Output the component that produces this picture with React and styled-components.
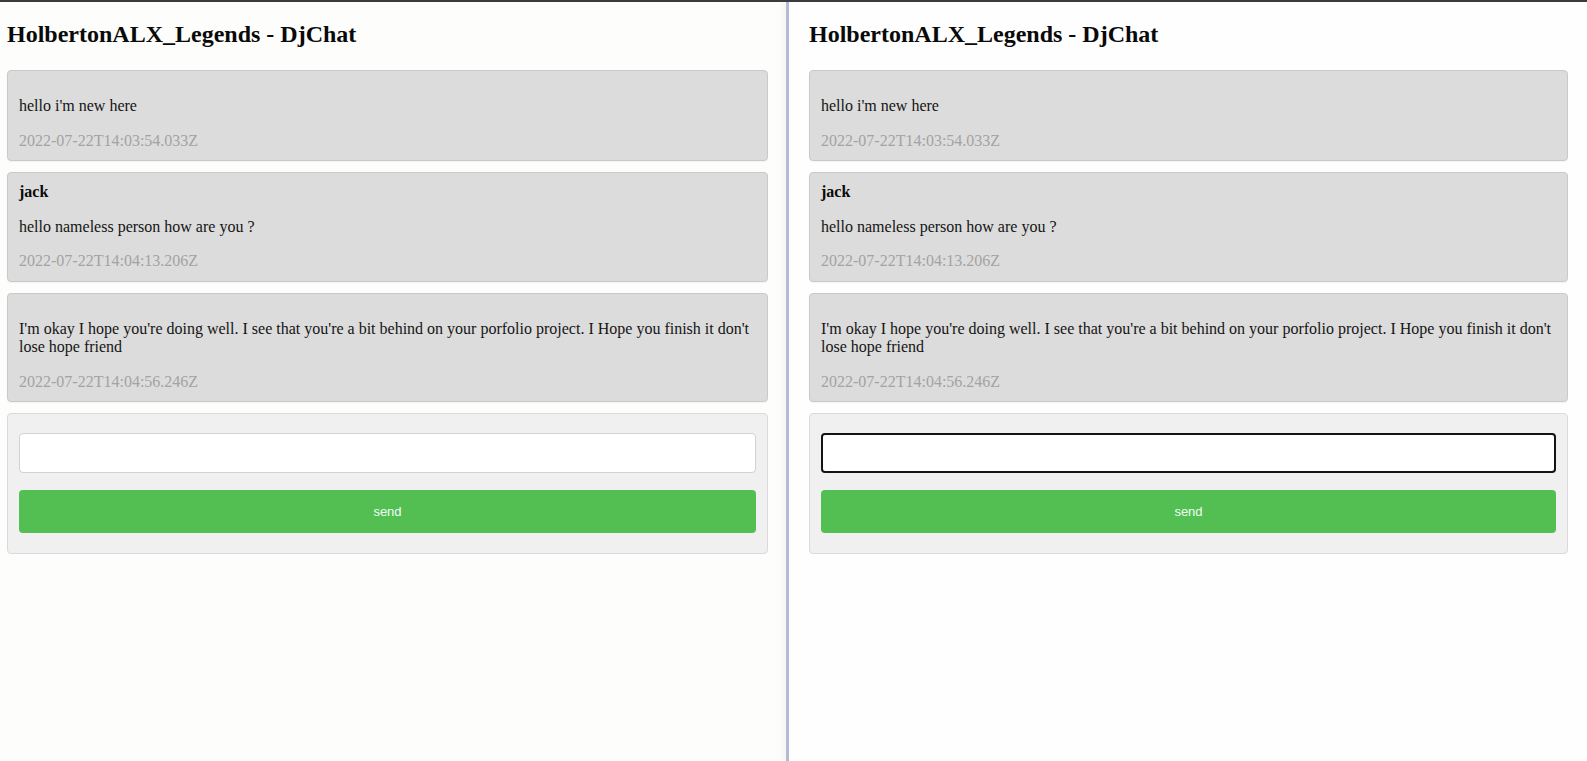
import styled, { createGlobalStyle } from "styled-components"

const GlobalStyle = createGlobalStyle`
html, body {
    margin: 0;
    padding: 0;
    background: #fefefe;
    font-family: "Liberation Serif", "Times New Roman", serif;
}
`

const messages = [
    { user: "", text: "hello i'm new here", date: "2022-07-22T14:03:54.033Z" },
    { user: "jack", text: "hello nameless person how are you ?", date: "2022-07-22T14:04:13.206Z" },
    { user: "", text: "I'm okay I hope you're doing well. I see that you're a bit behind on your porfolio project. I Hope you finish it don't lose hope friend", date: "2022-07-22T14:04:56.246Z" },
]

const ChatWindow = ({ focused, left }) => {
    return (
        <Pane left={left}>
            <Title>HolbertonALX_Legends - DjChat</Title>
            {messages.map((m, i) => (
                <Card key={i}>
                    <User>{m.user}</User>
                    <Message>{m.text}</Message>
                    <Stamp>{m.date}</Stamp>
                </Card>
            ))}
            <Form onSubmit={(e) => e.preventDefault()}>
                <Input type="text" focused={focused} />
                <Send type="submit">send</Send>
            </Form>
        </Pane>
    )
}

const App = () => {
    return (
        <>
            <GlobalStyle />
            <Screen>
                <ChatWindow left />
                <Divider />
                <ChatWindow focused />
            </Screen>
        </>
    )
}

const Screen = styled.div`
display: flex;
height: 100vh;
box-sizing: border-box;
border-top: 2px solid #3a3b3d;
overflow: hidden;
`

const Pane = styled.div`
box-sizing: border-box;
width: ${(p) => (p.left ? "786px" : "auto")};
flex: ${(p) => (p.left ? "none" : "1")};
padding: ${(p) => (p.left ? "0 18px 0 7px" : "0 19px 0 20px")};
background: ${(p) => (p.left ? "#fdfefb" : "#fefefe")};
`

const Divider = styled.div`
width: 3px;
flex: none;
background: #b3bad6;
box-shadow: -3px 0 5px rgba(120, 120, 90, 0.12);
`

const Title = styled.h2`
margin: 18px 0 22px;
font-size: 24px;
line-height: 28px;
font-weight: 700;
color: #0a0a0a;
`

const Card = styled.div`
background: #dcdcdc;
border: 1px solid #c9c9c9;
border-radius: 4px;
padding: 10px 11px;
margin-bottom: 11px;
color: #141414;
font-size: 16px;
line-height: 18.5px;
box-shadow: 0 1px 1px rgba(0, 0, 0, 0.04);
`

const User = styled.div`
font-weight: 700;
color: #0a0a0a;
`

const Message = styled.p`
margin: 16px 0;
`

const Stamp = styled.div`
color: #a3a3a3;
`

const Form = styled.form`
display: flex;
flex-direction: column;
gap: 17px;
background: #f0f0f0;
border: 1px solid #dadada;
border-radius: 4px;
padding: 19px 11px 20px;
`

const Input = styled.input`
box-sizing: border-box;
height: 40px;
width: 100%;
background: #fff;
border: ${(p) => (p.focused ? "2px solid #141414" : "1px solid #d2d2d2")};
border-radius: 4px;
outline: none;
padding: 0 10px;
`

const Send = styled.button`
height: 43px;
width: 100%;
background: #53bf53;
border: none;
border-radius: 4px;
color: #f2fbf4;
font-family: "Liberation Sans", Arial, sans-serif;
font-size: 13px;
cursor: pointer;
`

export default App
